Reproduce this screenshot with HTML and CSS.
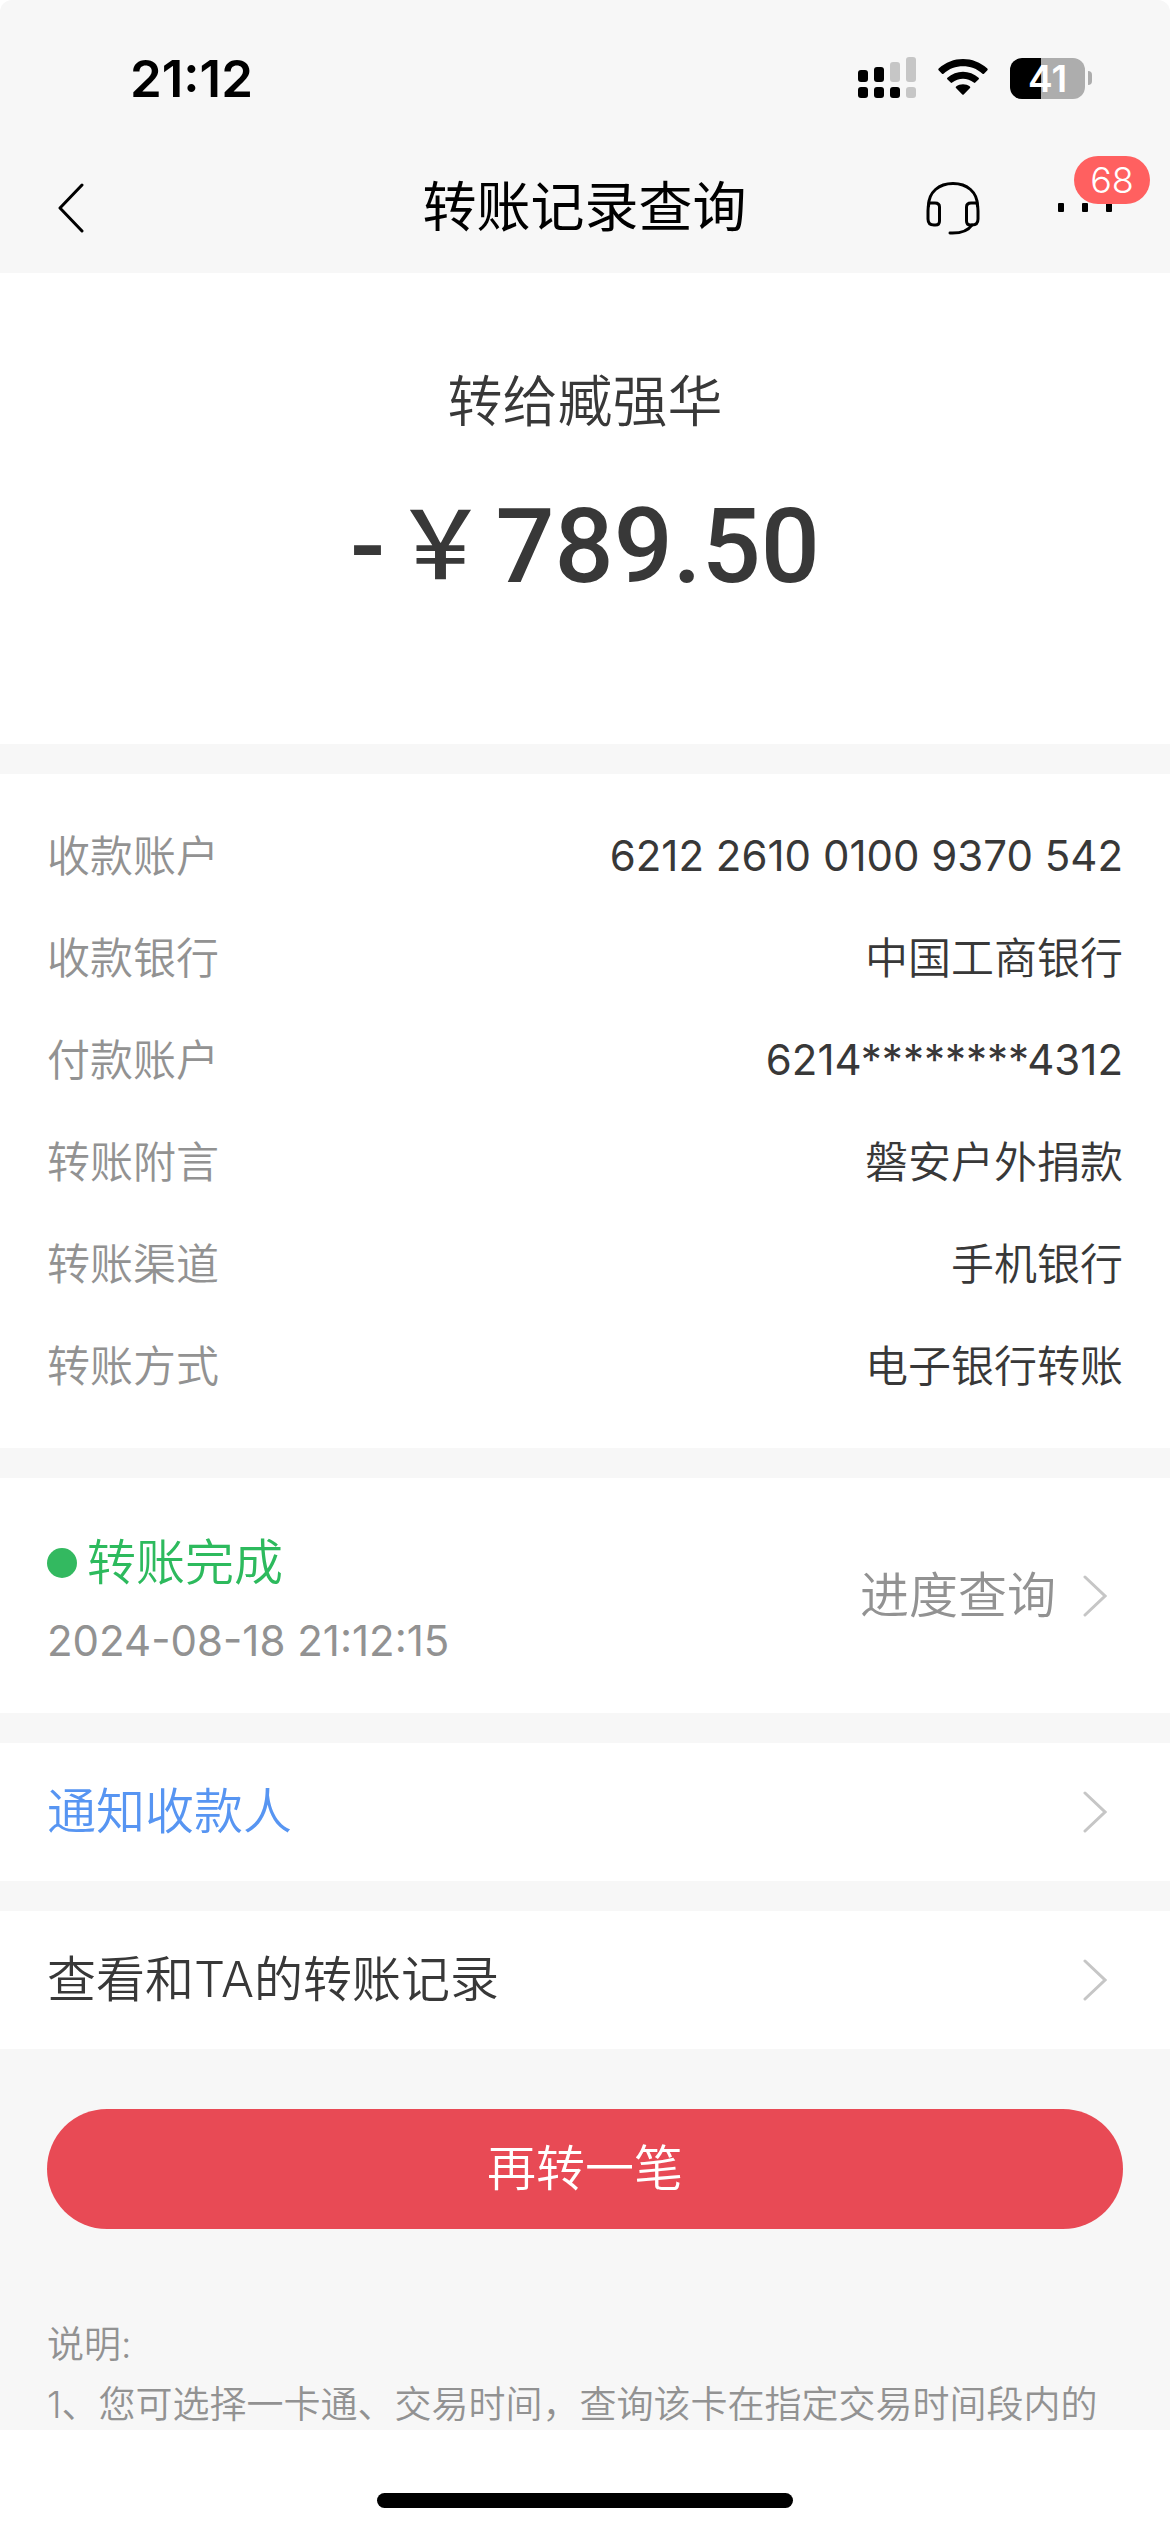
FILE: index.html
```html
<!DOCTYPE html>
<html lang="zh-CN">
<head>
    <meta charset="UTF-8">
    <meta name="viewport" content="width=device-width, initial-scale=1.0">
    <title>转账记录查询</title>
    <link rel="stylesheet" href="styles.css">
</head>
<body>

<header class="top">
    <div class="status-bar">
        <span class="time">21:12</span>
        <div class="status-icons">
            <svg width="58" height="42" viewBox="0 0 58 42" aria-hidden="true">
                <rect x="0" y="13" width="10" height="12" rx="3"/>
                <rect x="16" y="10" width="10" height="15" rx="3"/>
                <rect x="32" y="5" width="10" height="20" rx="3" fill="#c6c6c6"/>
                <rect x="48" y="0" width="10" height="25" rx="3" fill="#c6c6c6"/>
                <rect x="0" y="30" width="10" height="11" rx="3"/>
                <rect x="16" y="30" width="10" height="11" rx="3"/>
                <rect x="32" y="30" width="10" height="11" rx="3"/>
                <rect x="48" y="30" width="10" height="11" rx="3" fill="#c6c6c6"/>
            </svg>
            <svg width="50" height="38" viewBox="0 0 50 38" aria-hidden="true">
                <path d="M0.6 11.2 Q-0.1 10.4 0.7 9.6 C14.3 -3.2 35.7 -3.2 49.3 9.6 Q50.1 10.4 49.4 11.2 L46 14.7 Q45.3 15.4 44.5 14.7 C33.4 4.9 16.6 4.9 5.5 14.7 Q4.7 15.4 4 14.7 Z"/>
                <path d="M9.3 20.2 Q8.6 19.4 9.4 18.7 C18.2 10.7 31.8 10.7 40.6 18.7 Q41.4 19.4 40.7 20.2 L37.3 23.6 Q36.6 24.3 35.8 23.6 C29.6 18.4 20.4 18.4 14.2 23.6 Q13.4 24.3 12.7 23.6 Z"/>
                <path d="M18 29.1 Q17.2 28.3 18.1 27.6 C22 24.6 28 24.6 31.9 27.6 Q32.8 28.3 32 29.1 L25.7 35.5 Q25 36.2 24.3 35.5 Z"/>
            </svg>
            <div class="battery">
                <span class="battery-level">41</span>
                <span class="battery-tip"></span>
            </div>
        </div>
    </div>
    <nav class="nav-bar">
        <button type="button" class="icon-btn" aria-label="返回">
            <svg width="28" height="50" viewBox="0 0 28 50" fill="none" stroke="#000" stroke-width="3" stroke-linecap="round" stroke-linejoin="round">
                <path d="M25 2 L3 25 L25 48"/>
            </svg>
        </button>
        <h1>转账记录查询</h1>
        <div class="nav-actions">
            <button type="button" class="icon-btn" aria-label="客服">
                <svg width="54" height="54" viewBox="0 0 54 54" fill="none" stroke="#000" stroke-width="3" stroke-linecap="round" stroke-linejoin="round">
                    <path d="M2.5 25 C2.5 11 13 2.5 27 2.5 C41 2.5 51.5 11 51.5 25"/>
                    <path d="M3 22 H9 Q13.5 22 13.5 26 V40 Q13.5 44 9.5 44 H8 Q2 44 2 38 V30 Q2 25 3 22 Z"/>
                    <path d="M51 22 H45 Q40.5 22 40.5 26 V40 Q40.5 44 44.5 44 H46 Q52 44 52 38 V30 Q52 25 51 22 Z"/>
                    <path d="M46 44 C42 50 35 52.5 24 52"/>
                </svg>
            </button>
            <button type="button" class="icon-btn more" aria-label="更多">
                <svg width="54" height="9" viewBox="0 0 54 9">
                    <rect x="0" y="0" width="6" height="9" rx="1"/>
                    <rect x="24" y="0" width="6" height="9" rx="1"/>
                    <rect x="48" y="0" width="6" height="9" rx="1"/>
                </svg>
                <span class="badge">68</span>
            </button>
        </div>
    </nav>
</header>

<main>
    <section class="card summary">
        <p class="payee">转给臧强华</p>
        <p class="amount"><span>-</span><span class="yen">￥</span><span>789.50</span></p>
    </section>

    <section class="card">
        <dl class="details">
            <div class="row"><dt>收款账户</dt><dd class="number">6212 2610 0100 9370 542</dd></div>
            <div class="row"><dt>收款银行</dt><dd>中国工商银行</dd></div>
            <div class="row"><dt>付款账户</dt><dd class="number">6214********4312</dd></div>
            <div class="row"><dt>转账附言</dt><dd>磐安户外捐款</dd></div>
            <div class="row"><dt>转账渠道</dt><dd>手机银行</dd></div>
            <div class="row"><dt>转账方式</dt><dd>电子银行转账</dd></div>
        </dl>
    </section>

    <section class="card progress">
        <div>
            <p class="state"><span class="dot"></span>转账完成</p>
            <p class="date number">2024-08-18 21:12:15</p>
        </div>
        <a class="progress-link" href="#">进度查询
            <svg class="chevron" width="24" height="42" viewBox="0 0 24 42"><path d="M2 2 L22 21 L2 40"/></svg>
        </a>
    </section>

    <a class="card link notify" href="#">通知收款人
        <svg class="chevron" width="24" height="42" viewBox="0 0 24 42"><path d="M2 2 L22 21 L2 40"/></svg>
    </a>

    <a class="card link" href="#">查看和TA的转账记录
        <svg class="chevron" width="24" height="42" viewBox="0 0 24 42"><path d="M2 2 L22 21 L2 40"/></svg>
    </a>
</main>

<div class="bottom">
    <button type="button" class="btn-again">再转一笔</button>
    <div class="notes">
        <p>说明:</p>
        <p>1、您可选择一卡通、交易时间，查询该卡在指定交易时间段内的</p>
    </div>
</div>

<footer class="home">
    <div class="home-bar"></div>
</footer>

</body>
</html>
```
FILE: styles.css
```css
* {
    box-sizing: border-box;
}
body {
    margin: 0;
    min-height: 100vh;
    display: flex;
    flex-direction: column;
    background-color: #fff;
    color: #383838;
    font-family: Inter, "Noto Sans CJK SC", sans-serif;
    font-size: 43px;
    font-weight: 350;
}
h1, p, dl, dd {
    margin: 0;
}
a {
    color: inherit;
    text-decoration: none;
}
button {
    font-family: inherit;
    font-weight: inherit;
    border: none;
    cursor: pointer;
}
.number {
    font-size: 42px;
    font-weight: 400;
}
.top {
    background-color: #f7f7f7;
    border-radius: 12px 12px 0 0;
    color: #000;
}

/* status bar */
.status-bar {
    display: flex;
    justify-content: space-between;
    align-items: center;
    height: 140px;
    padding: 16px 78px 0 130px;
}
.time {
    font-size: 51px;
    font-weight: 600;
}
.status-icons {
    display: flex;
    align-items: center;
    gap: 22px;
}
.battery {
    display: flex;
    align-items: center;
    gap: 3px;
}
.battery-level {
    width: 75px;
    height: 41px;
    border-radius: 12px;
    background: linear-gradient(to right, #000 41%, #adadad 41%);
    color: #fff;
    font-size: 37px;
    font-weight: 600;
    line-height: 41px;
    text-align: center;
}
.battery-tip {
    width: 4px;
    height: 14px;
    border-radius: 0 8px 8px 0;
    background-color: #adadad;
}

/* title bar */
.nav-bar {
    display: grid;
    grid-template-columns: 1fr auto 1fr;
    align-items: center;
    height: 133px;
    padding: 2px 58px 0 57px;
}
h1 {
    font-size: 54px;
    font-weight: 400;
    line-height: 60px;
}
.icon-btn {
    display: flex;
    padding: 0;
    background: none;
    justify-self: start;
}
.nav-actions {
    display: flex;
    justify-content: flex-end;
    align-items: center;
    gap: 78px;
}
.more {
    position: relative;
}
.badge {
    position: absolute;
    left: 16px;
    bottom: 8px;
    width: 76px;
    border-radius: 24px;
    background-color: #ff6060;
    color: #fff;
    font-size: 36px;
    line-height: 48px;
}

/* content */
main {
    display: grid;
    gap: 30px;
    background-color: #f7f7f7;
}
.card {
    background-color: #fff;
    padding: 0 47px;
}
.summary {
    padding-top: 88px;
    padding-bottom: 117px;
    text-align: center;
}
.payee {
    font-size: 55px;
    line-height: 80px;
}
.amount {
    display: flex;
    justify-content: center;
    align-items: center;
    gap: 8px;
    margin-top: 26px;
    font-family: Roboto, "Noto Sans CJK SC", sans-serif;
    font-size: 104px;
    font-weight: 500;
    line-height: 160px;
}
.yen {
    font-size: 94px;
}
.details {
    padding: 31px 0;
}
.row {
    display: flex;
    justify-content: space-between;
    line-height: 102px;
}
dt, .date, .progress-link, .notes {
    color: #929292;
}
.progress {
    display: flex;
    justify-content: space-between;
    align-items: center;
    height: 235px;
}
.state {
    display: flex;
    align-items: center;
    gap: 10px;
    padding-top: 10px;
    color: #2dba5d;
    font-size: 49px;
    line-height: 80px;
}
.dot {
    width: 30px;
    height: 30px;
    border-radius: 50%;
    background-color: #33b960;
}
.date {
    line-height: 76px;
}
.progress-link, .link {
    display: flex;
    justify-content: space-between;
    align-items: center;
    gap: 27px;
    font-size: 49px;
    line-height: 60px;
}
.progress-link {
    padding-right: 16px;
}
.chevron {
    fill: none;
    stroke: #c6c6c6;
    stroke-width: 3;
    stroke-linecap: round;
}
.link {
    height: 138px;
    padding-right: 63px;
}
.notify {
    color: #5795f2;
}

/* button and notes */
.bottom {
    flex: 1;
    padding: 60px 47px 0;
    background-color: #f7f7f7;
}
.btn-again {
    display: block;
    width: 100%;
    height: 120px;
    padding: 0;
    border-radius: 60px;
    background-color: #e84a55;
    color: #fff;
    font-size: 49px;
    line-height: 60px;
}
.notes {
    margin-top: 86px;
    margin-bottom: -6px;
    font-size: 37px;
    line-height: 60px;
    white-space: nowrap;
}
.home {
    height: 102px;
    padding-top: 63px;
}
.home-bar {
    width: 416px;
    height: 15px;
    margin: 0 auto;
    border-radius: 8px;
    background-color: #000;
}
```
